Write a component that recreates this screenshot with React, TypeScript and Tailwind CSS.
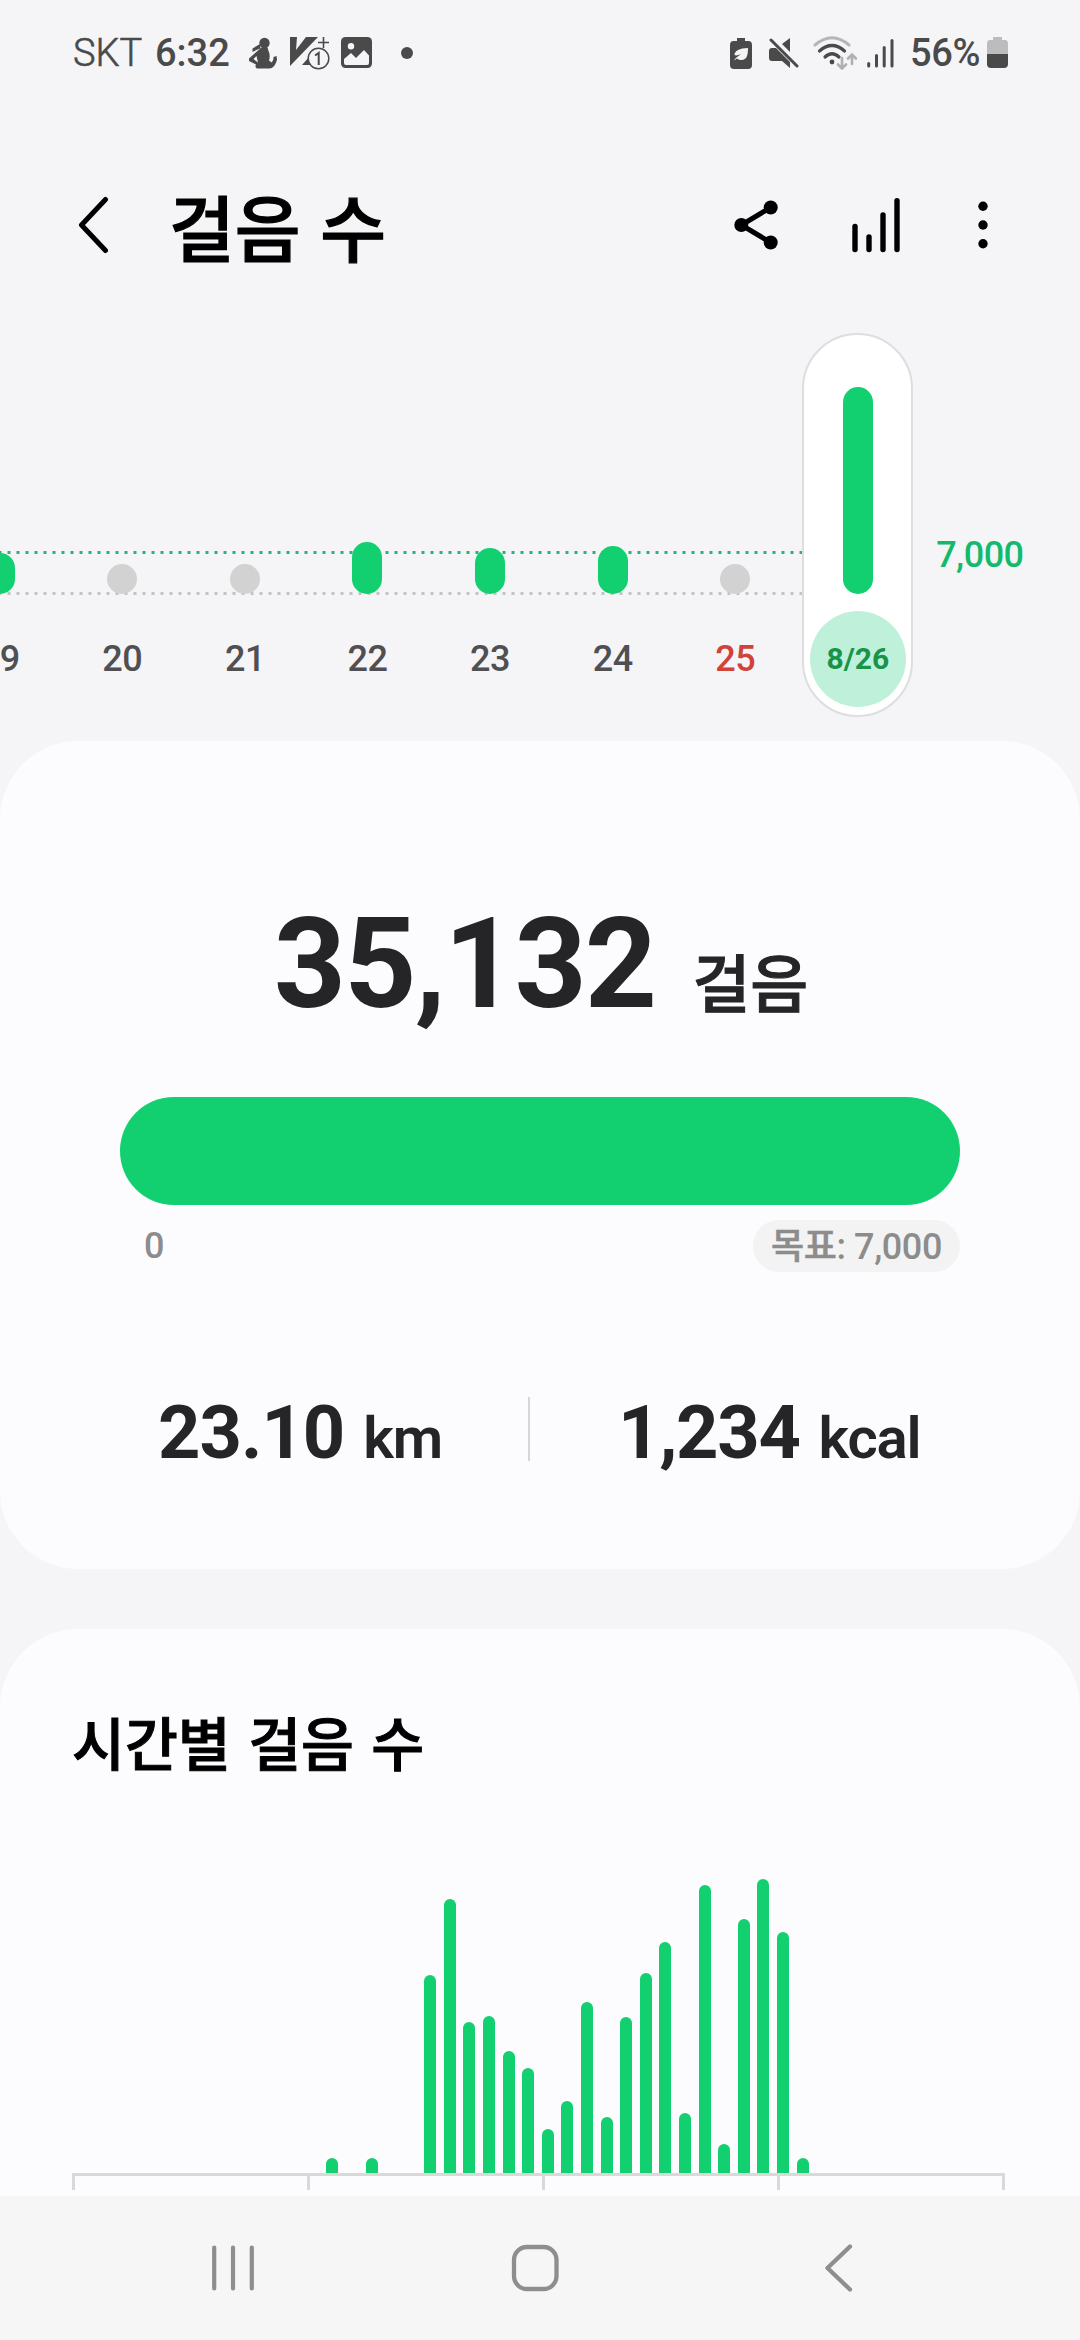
const days = [
  { label: "19", height: 41, done: true },
  { label: "20", height: 30, done: false },
  { label: "21", height: 30, done: false },
  { label: "22", height: 52, done: true },
  { label: "23", height: 46, done: true },
  { label: "24", height: 48, done: true },
  { label: "25", height: 30, done: false, holiday: true },
];

// one value per half hour
const hourly = [
  0, 0, 0, 0, 0, 0, 0, 0, 0, 0, 0, 0, 0, 15, 0, 15, 0, 0, 198, 274, 151, 157, 122, 105, 44, 72, 171,
  56, 156, 200, 231, 60, 288, 29, 254, 294, 241, 15, 0, 0, 0, 0, 0, 0, 0, 0, 0, 0,
];

function StatusBar() {
  return (
    <div className="flex h-[102px] items-center pt-[3px] pl-[73px] text-[38px] leading-none text-[#4a4a4a]">
      <span className="w-[82px] font-light [-webkit-text-stroke:0.6px_#4a4a4a]">SKT</span>
      <span className="w-[94px] font-medium">6:32</span>
      <svg className="h-8 w-7" viewBox="0 0 28 32">
        <circle cx="15.500" cy="6" r="5.200" fill="#4a4a4a" />
        <path d="M11 7L3.500 11.500v3.500l5-2.500 3-1z" fill="#4a4a4a" />
        <path d="M12.500 10.500h6l1 3.500c1.500 3 1.500 6.500.5 9.500l2.500 2c1.500-1.500 2-3 2-5.500l3-1 .5 3.500c-1 4.500-3.500 9-7.500 9H8.500c-2 0-2.500-2.500-1.500-4L0 24v-2.500L9 13.500z" fill="#4a4a4a" />
        <path d="M7.500 19l-3 3 4.500 3.500z" fill="#f5f5f8" />
      </svg>
      <svg className="ml-[13px] h-[34px] w-10" viewBox="0 0 40 34" fill="none">
        <path d="M0 1h7l-1 13L16 1h12L0 30z" fill="#4a4a4a" />
        <path d="M21 15l-1 5-8 9h10z" fill="#4a4a4a" />
        <path d="M33.500 1v11M28 6.500h11" stroke="#4a4a4a" strokeWidth="1.600" />
        <circle cx="28.500" cy="22.500" r="10.300" fill="#f5f5f8" stroke="#4a4a4a" strokeWidth="1.500" />
        <path d="M25 19.500l3.700-2.500v12" stroke="#4a4a4a" strokeWidth="2" />
      </svg>
      <svg className="ml-[11px] size-[31px]" viewBox="0 0 31 31" fill="none">
        <rect width="31" height="31" rx="4.500" fill="#4a4a4a" />
        <circle cx="10" cy="9.300" r="3.200" fill="#f5f5f8" />
        <path d="M3 22l7-6 5 5 8-8 5 5.500V26q0 2-2 2H5q-2 0-2-2z" fill="#f5f5f8" />
      </svg>
      <span className="ml-[29px] size-3 rounded-full bg-[#4a4a4a]" />

      <svg className="ml-[317px] h-8 w-[22px]" viewBox="0 0 22 32">
        <path d="M7 1h8v3h3.500Q22 4 22 8v20q0 4-4 4H4q-4 0-4-4V8q0-4 3.500-4H7z" fill="#4a4a4a" />
        <path d="M4.500 18c0-4 5-7 13.500-7 0 7-1 12-6.500 12-2.500 0-3.500-.6-4.500-1.500l-3 2c1-2.500 4-4 7-6.500-2.500 1-4.500 2-6.500 1z" fill="#f5f5f8" />
      </svg>
      <svg className="ml-[17px] h-[30px] w-[30px]" viewBox="0 0 30 30">
        <path d="M0 13q0-3 3-3h4l14 14v6l-8-7H3q-3 0-3-3zM13 6l8-6v14z" fill="#4a4a4a" />
        <path d="M2 2l26 26" stroke="#4a4a4a" strokeWidth="3" strokeLinecap="round" />
      </svg>
      <svg className="ml-[14px] h-[34px] w-[44px]" viewBox="0 0 44 34" fill="none" strokeLinecap="round">
        <path d="M2 9q17-14.500 34 0" stroke="#b5b5b7" strokeWidth="3" />
        <path d="M6.500 15q12.500-11 25 0M12 21q7-6.500 14 0" stroke="#4a4a4a" strokeWidth="3.200" />
        <circle cx="19" cy="26" r="2.400" fill="#4a4a4a" />
        <path d="M29 22v10M25 28.500l4 4 4-4M39 28V19M35 22.500l4-4 4 4" stroke="#b0b0b2" strokeWidth="2.600" />
      </svg>
      <svg className="ml-[10px] h-[30px] w-[27px]" viewBox="0 0 27 30" stroke="#4a4a4a" strokeWidth="3" strokeLinecap="round">
        <path d="M1.700 25.500v2.500M9.500 17.500V28M17.200 9.500V28M25 2.500V28" />
      </svg>
      <span className="ml-[16px] w-[71px] font-medium tracking-[-0.300px]">56%</span>
      <svg className="ml-[6px] h-[31px] w-[21px]" viewBox="0 0 21 31">
        <path d="M6 0h9v3h3q3 0 3 4v10H0V7q0-4 3-4h3z" fill="#bcbcbe" />
        <path d="M0 17h21v10q0 4-4 4H4q-4 0-4-4z" fill="#4a4a4a" />
      </svg>
    </div>
  );
}

function Header() {
  return (
    <div className="mt-12 flex h-[150px] items-center pl-[78px] text-black">
      <svg className="h-[58px] w-[31px]" viewBox="0 0 31 58" fill="none" stroke="currentColor" strokeWidth="5" strokeLinecap="round" strokeLinejoin="round">
        <path d="M27.500 3.500L3.500 29l24 25.500" />
      </svg>
      <h1 className="ml-[60px] w-[563px] font-['Noto_Sans_CJK_KR',sans-serif] text-[71.500px] leading-[70px] font-medium whitespace-nowrap [-webkit-text-stroke:1.200px_#000] [word-spacing:3.500px]">
        걸음 수
      </h1>
      <svg className="h-[50px] w-[46px]" viewBox="0 0 46 50" fill="currentColor">
        <path d="M38.700 7.500L9.300 25l29.400 17.500" fill="none" stroke="currentColor" strokeWidth="5" />
        <circle cx="9.300" cy="25" r="7" />
        <circle cx="38.700" cy="7.500" r="7" />
        <circle cx="38.700" cy="42.500" r="7" />
      </svg>
      <svg className="ml-[74px] h-[56px] w-[50px]" viewBox="0 0 50 56" stroke="currentColor" strokeWidth="5.400" strokeLinecap="round">
        <path d="M3 29.500V52.500M17 40V52.500M31 18V52.500M45 3.700V52.500" />
      </svg>
      <svg className="ml-[74px] h-[50px] w-[14px]" viewBox="0 0 14 50" fill="currentColor">
        <circle cx="7" cy="6.300" r="4.700" />
        <circle cx="7" cy="25" r="4.700" />
        <circle cx="7" cy="43.700" r="4.700" />
      </svg>
    </div>
  );
}

function DayStrip() {
  return (
    <div className="relative -ml-[61.600px] flex h-[441px] w-[1142px]">
      <div className="absolute top-[251px] left-[61.600px] h-[3px] w-[802px] bg-[radial-gradient(circle_at_center,#22b573_1.500px,transparent_1.900px)] bg-[length:9px_3px] bg-[position:4.500px_0]" />
      <div className="absolute top-[292px] left-[61.600px] h-[3px] w-[802px] bg-[radial-gradient(circle_at_center,#c3c3c6_1.500px,transparent_1.900px)] bg-[length:9px_3px] bg-[position:4.500px_0]" />
      {days.map((day) => (
        <div key={day.label} className="relative flex w-[122.600px] shrink-0 flex-col items-center">
          <div className="flex h-[294px] items-end">
            <div
              className={day.done ? "w-[30px] rounded-full bg-[#12d06f]" : "w-[30px] rounded-full bg-[#d2d2d2]"}
              style={{ height: day.height }}
            />
          </div>
          <span
            className={
              day.holiday
                ? "mt-4 text-4xl leading-[98px] font-medium tracking-[-0.500px] text-[#d0423a]"
                : "mt-4 text-4xl leading-[98px] font-medium tracking-[-0.500px] text-[#505052]"
            }
          >
            {day.label}
          </span>
        </div>
      ))}
      <div className="relative flex w-[122.600px] shrink-0 flex-col items-center">
        <div className="mt-[33px] flex h-[384px] w-[111px] flex-col items-center rounded-full border-2 border-[#dedee0] bg-white">
          <div className="mt-[52px] h-[207px] w-[30px] rounded-full bg-[#12d06f]" />
          <div className="mt-[17px] size-24 rounded-full bg-[#bff0d9] text-center text-[30px] leading-[96px] font-bold text-[#1a9347]">
            8/26
          </div>
        </div>
      </div>
      <span className="mt-[233px] ml-[17px] text-4xl leading-[44px] font-medium tracking-[-0.500px] text-[#14ba6c]">
        7,000
      </span>
    </div>
  );
}

function SummaryCard() {
  return (
    <section className="h-[828px] rounded-[78px] bg-[#fcfcfe] px-[120px] pt-[143px] text-[#252528]">
      <div className="flex h-[160px] items-baseline justify-center pl-0.5">
        <span className="text-[126px] leading-[160px] font-bold tracking-[-1.800px]">35,132</span>
        <span className="ml-[37px] font-['Noto_Sans_CJK_KR',sans-serif] text-[63px] leading-[80px] font-medium [-webkit-text-stroke:1px_#252528]">
          걸음
        </span>
      </div>
      <div className="mt-[53px] h-[108px] rounded-full bg-[#12d06f]" />
      <div className="mt-[15px] flex h-[52px] items-center justify-between pl-6 text-4xl font-medium text-[#8c8c8c]">
        <span>0</span>
        <span className="h-[52px] w-[207px] rounded-full bg-[#f3f3f3] text-center font-[Roboto,'Noto_Sans_CJK_KR',sans-serif] leading-[54px] tracking-[-0.400px] whitespace-nowrap">
          <span className="[-webkit-text-stroke:0.500px_#8c8c8c]">목표</span>: 7,000
        </span>
      </div>
      <div className="mt-[125px] flex h-16 items-center">
        <div className="flex w-[408px] items-baseline pt-[13px] pl-[38px]">
          <span className="text-[74px] leading-[64px] font-bold tracking-[-1px]">23.10</span>
          <span className="ml-[19px] text-[58px] leading-[64px] font-semibold tracking-[-1.200px]">km</span>
        </div>
        <div className="h-16 w-0.5 bg-[#d6d6d8]" />
        <div className="flex items-baseline pt-[13px] pl-[88px]">
          <span className="text-[74px] leading-[64px] font-bold tracking-[-1.300px]">1,234</span>
          <span className="ml-[19px] text-[58px] leading-[64px] font-semibold tracking-[-1.200px]">kcal</span>
        </div>
      </div>
    </section>
  );
}

function HourlyCard() {
  return (
    <section className="mt-[60px] h-[567px] rounded-t-[78px] bg-[#fcfcfe] pt-[72px]">
      <h2 className="pl-[72px] font-['Noto_Sans_CJK_KR',sans-serif] text-[57.500px] leading-[80px] font-medium text-black [-webkit-text-stroke:1px_#000] [word-spacing:4.500px]">
        시간별 걸음 수
      </h2>
      <div className="mt-[92px] ml-[67.800px] flex h-[300px] w-[940.800px] items-end">
        {hourly.map((value, i) => (
          <div key={i} className="flex w-[19.600px] justify-center">
            <div className="w-3 rounded-t-full bg-[#12d06f]" style={{ height: value }} />
          </div>
        ))}
      </div>
      <div className="ml-[72px] flex h-[17px] w-[932.500px] border-t-[3px] border-r-[3px] border-[#d9d9d9]">
        <div className="w-[235px] border-l-[3px] border-[#d9d9d9]" />
        <div className="w-[235px] border-l-[3px] border-[#d9d9d9]" />
        <div className="w-[235px] border-l-[3px] border-[#d9d9d9]" />
        <div className="border-l-[3px] border-[#d9d9d9]" />
      </div>
    </section>
  );
}

function NavBar() {
  return (
    <div className="flex h-36 items-center bg-[#f6f6f6] pl-[211px] text-[#8e8e8e]">
      <svg className="h-[50px] w-[44px]" viewBox="0 0 44 50" stroke="currentColor" strokeWidth="4.200" strokeLinecap="round">
        <path d="M3.200 4.500v41M22 4.500v41M40.800 4.500v41" />
      </svg>
      <svg className="ml-[255px] size-[50px]" viewBox="0 0 50 50" fill="none" stroke="currentColor" strokeWidth="4.300">
        <rect x="4" y="4" width="42.500" height="42" rx="13" />
      </svg>
      <svg className="ml-[263px] h-[50px] w-[32px]" viewBox="0 0 32 50" fill="none" stroke="currentColor" strokeWidth="4.300" strokeLinecap="round" strokeLinejoin="round">
        <path d="M27 3.500L4.500 25 27 46.500" />
      </svg>
    </div>
  );
}

export default function App() {
  return (
    <main className="h-[2340px] w-[1080px] overflow-hidden bg-[#f5f5f8] font-[Roboto,'Noto_Sans_CJK_KR',sans-serif]">
      <StatusBar />
      <Header />
      <DayStrip />
      <SummaryCard />
      <HourlyCard />
      <NavBar />
    </main>
  );
}
